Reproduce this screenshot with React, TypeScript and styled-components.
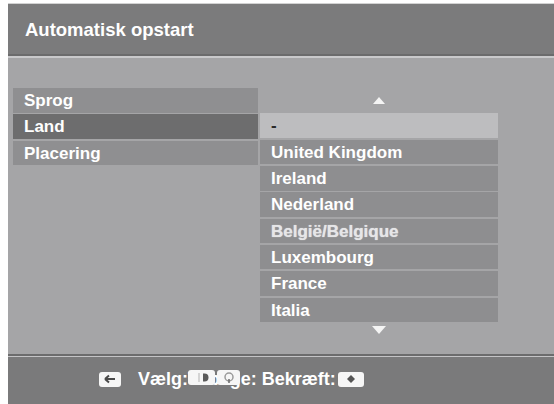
import React from "react"
import styled, { createGlobalStyle } from "styled-components"

const GlobalStyle = createGlobalStyle`
  html, body {
    margin: 0;
    padding: 0;
    background: #ffffff;
  }
  body {
    font-family: "Liberation Sans", Arial, sans-serif;
  }
`

const Page = styled.div`
  width: 554px;
  height: 404px;
  padding: 3px 0 0 8px;
  box-sizing: border-box;
  overflow: hidden;
`

const Frame = styled.div`
  height: 401px;
  display: flex;
  flex-direction: column;
`

const Header = styled.div`
  height: 48px;
  flex-shrink: 0;
  display: flex;
  align-items: center;
  padding: 2px 0 0 17px;
  background: #7b7b7c;
  border-top: 1px solid #d2d2d2;
  border-bottom: 2px solid #6b6b6c;
  color: #ffffff;
  font-size: 18.5px;
  font-weight: bold;
`

const Rule = styled.div`
  height: 2px;
  flex-shrink: 0;
  background: #c9c9cb;
`

const Body = styled.div`
  flex: 1;
  display: flex;
  align-items: flex-start;
  padding: 30px 0 0 5px;
  background: #a5a5a7;
`

const MenuColumn = styled.div`
  width: 245px;
  display: flex;
  flex-direction: column;
  gap: 1.8px;
`

const MenuItem = styled.div<{ $active?: boolean }>`
  height: 24.5px;
  line-height: 24.5px;
  padding: 1px 0 0 11px;
  box-sizing: border-box;
  background: ${props => (props.$active ? "#6d6d6e" : "#8f8f91")};
  color: #ffffff;
  font-size: 17px;
  font-weight: bold;
`

const ListColumn = styled.div`
  width: 238px;
  margin-left: 2px;
  display: flex;
  flex-direction: column;
  gap: 1.8px;
`

const ScrollMark = styled.div<{ $down?: boolean }>`
  height: ${props => (props.$down ? "20px" : "23.7px")};
  display: flex;
  justify-content: center;
  align-items: ${props => (props.$down ? "flex-start" : "center")};
  padding-top: ${props => (props.$down ? "2px" : "2px")};
  box-sizing: border-box;
`

const ListItem = styled.div<{ $selected?: boolean; $faded?: boolean }>`
  height: 24.5px;
  line-height: 24.5px;
  padding: 1px 0 0 11px;
  box-sizing: border-box;
  background: ${props => (props.$selected ? "#bdbdbf" : "#8e8e90")};
  color: ${props => (props.$selected ? "#2a2a2a" : props.$faded ? "#e6e6e8" : "#ffffff")};
  font-size: 17px;
  font-weight: bold;
  text-shadow: ${props => (props.$faded ? "0 0 1px rgba(255,255,255,0.7)" : "none")};
`

const Footer = styled.div`
  height: 46px;
  flex-shrink: 0;
  display: flex;
  align-items: center;
  padding: 0 0 2px 91px;
  background: #7a7a7b;
  border-top: 2px solid #6c6c6d;
  box-shadow: inset 0 1px 0 #c4c4c6;
  color: #ffffff;
  font-size: 18px;
  font-weight: bold;
`

const Legend = styled.span`
  margin-left: 17px;
  white-space: pre;
`

const Overlap = styled.span`
  position: relative;
  display: inline-block;
`

const KeyRow = styled.span`
  position: absolute;
  left: 0;
  top: 1px;
  display: flex;
  gap: 2px;
`

const KeyCap = styled.span<{ $w: number }>`
  width: ${props => props.$w}px;
  height: 15px;
  display: inline-flex;
  align-items: center;
  justify-content: center;
  border-radius: 3px;
  background: #f6f6f6;
  flex-shrink: 0;
`

const Spacer = styled.span`
  margin-left: 2px;
  display: inline-flex;
`

const Triangle = ({ down }: { down?: boolean }) => (
  <svg width="14" height="8" viewBox="0 0 14 8">
    <polygon points={down ? "0,0 14,0 7,8" : "1,7 13,7 7,0"} fill="#f4f4f4" />
  </svg>
)

const countries = [
  "United Kingdom",
  "Ireland",
  "Nederland",
  "België/Belgique",
  "Luxembourg",
  "France",
  "Italia",
]

const App: React.FC = () => (
  <Page>
    <GlobalStyle />
    <Frame>
      <Header>Automatisk opstart</Header>
      <Rule />
      <Body>
        <MenuColumn>
          <MenuItem>Sprog</MenuItem>
          <MenuItem $active>Land</MenuItem>
          <MenuItem>Placering</MenuItem>
        </MenuColumn>
        <ListColumn>
          <ScrollMark>
            <Triangle />
          </ScrollMark>
          <ListItem $selected>-</ListItem>
          {countries.map(name => (
            <ListItem key={name} $faded={name.startsWith("Belgi")}>
              {name}
            </ListItem>
          ))}
          <ScrollMark $down>
            <Triangle down />
          </ScrollMark>
        </ListColumn>
      </Body>
      <Footer>
        <KeyCap $w={22}>
          <svg width="12" height="10" viewBox="0 0 12 10">
            <path d="M1 5 L5 1.5 M1 5 L5 8.5 M1 5 H11" stroke="#4a4a4a" strokeWidth="2" fill="none" />
          </svg>
        </KeyCap>
        <Legend>
          Vælg:
          <Overlap>
            Tilbage:
            <KeyRow>
              <KeyCap $w={27}>
                <svg width="14" height="11" viewBox="0 0 14 11">
                  <path d="M4 1 V10" stroke="#c8c8c8" strokeWidth="1.5" />
                  <path d="M8 1.5 H9.5 A4 4 0 0 1 9.5 9.5 H8 Z" fill="#5a5a5a" />
                </svg>
              </KeyCap>
              <KeyCap $w={23}>
                <svg width="12" height="12" viewBox="0 0 12 12">
                  <circle cx="6" cy="6" r="4" stroke="#9a9a9a" strokeWidth="1.5" fill="none" />
                  <path d="M6 8 V12" stroke="#6a6a6a" strokeWidth="1.5" />
                </svg>
              </KeyCap>
            </KeyRow>
          </Overlap>
          {" Bekræft:"}
        </Legend>
        <Spacer>
          <KeyCap $w={26}>
            <svg width="10" height="10" viewBox="0 0 10 10">
              <polygon points="5,1 9,5 5,9 1,5" fill="#555555" />
            </svg>
          </KeyCap>
        </Spacer>
      </Footer>
    </Frame>
  </Page>
)

export default App
